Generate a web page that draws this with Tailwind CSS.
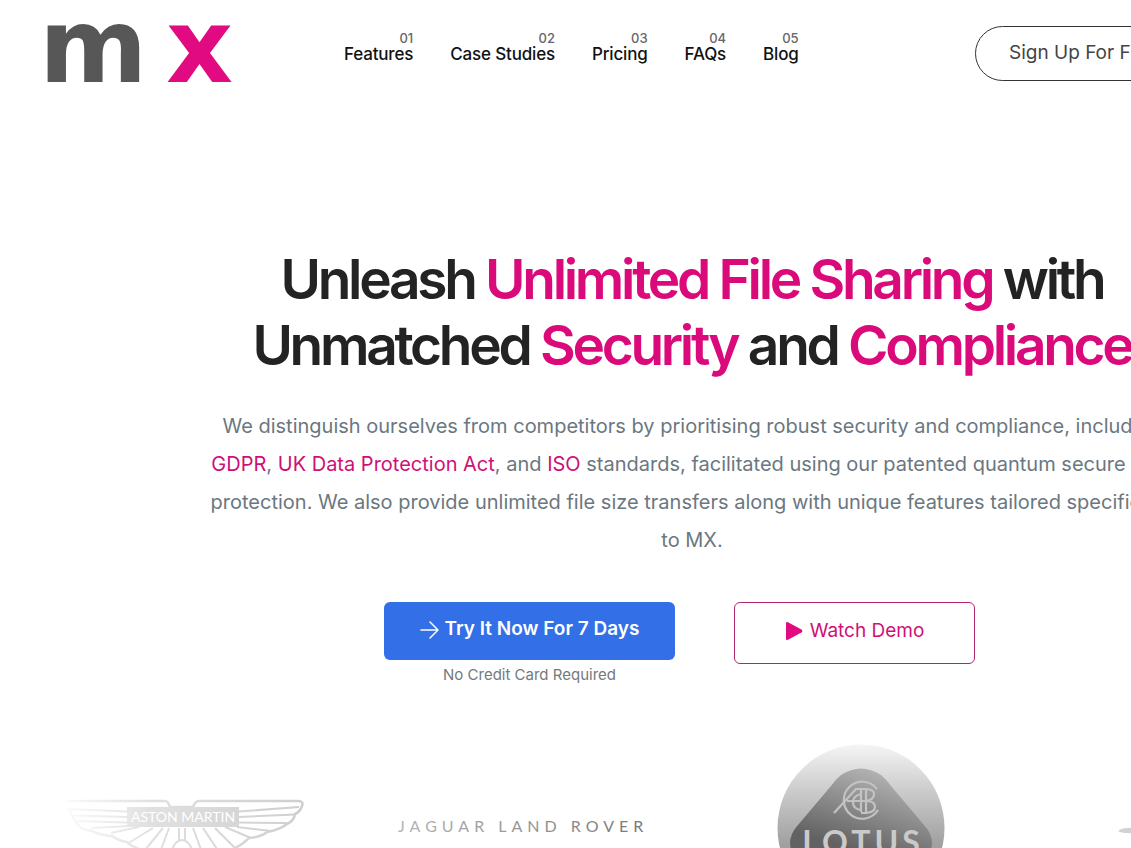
<!DOCTYPE html>
<html lang="en">
<head>
    <meta charset="UTF-8">
    <meta name="viewport" content="width=device-width, initial-scale=1.0">
    <title>MX - Unlimited File Sharing</title>
    <script src="https://cdn.jsdelivr.net/npm/@tailwindcss/browser@4"></script>
</head>
<body class="bg-white font-['Inter',sans-serif] overflow-x-hidden">
    <div class="min-w-[1384px]">
        <!-- Header -->
        <header class="flex items-start px-[47px] pt-[26px]">
            <a href="#" aria-label="MX home" class="w-[190px] shrink-0">
                <svg width="190" height="58" viewBox="0 0 190 58" class="overflow-visible font-['DejaVu_Sans',sans-serif] font-bold">
                    <text x="-8" y="56" font-size="104" fill="#575757">m</text>
                    <text x="119" y="56" font-size="104" fill="#e20a80">x</text>
                </svg>
            </a>
            <nav class="ml-[107px] flex gap-[37px] pt-[5px] text-[17px] leading-[18px] font-medium tracking-[-0.01em] text-[#111]">
                <a href="#" class="flex flex-col"><span class="self-end text-[13px] leading-[14px] tracking-normal text-[#666]">01</span>Features</a>
                <a href="#" class="flex flex-col"><span class="self-end text-[13px] leading-[14px] tracking-normal text-[#666]">02</span>Case Studies</a>
                <a href="#" class="flex flex-col"><span class="self-end text-[13px] leading-[14px] tracking-normal text-[#666]">03</span>Pricing</a>
                <a href="#" class="flex flex-col"><span class="self-end text-[13px] leading-[14px] tracking-normal text-[#666]">04</span>FAQs</a>
                <a href="#" class="flex flex-col"><span class="self-end text-[13px] leading-[14px] tracking-normal text-[#666]">05</span>Blog</a>
            </nav>
            <button type="button" class="ml-auto h-[55px] w-[362px] rounded-full border border-[#333] px-[33px] text-left text-[19px] text-[#444]">Sign Up For Free</button>
        </header>

        <main>
            <!-- Hero -->
            <section class="pt-[162px] text-center">
                <h1 class="text-[55px] leading-[66px] font-semibold tracking-[-0.06em] text-[#232323]">
                    Unleash <span class="text-[#db0a7b]">Unlimited File Sharing</span> with<br>
                    Unmatched <span class="text-[#db0a7b]">Security</span> and <span class="text-[#db0a7b]">Compliance</span>
                </h1>
                <p class="mx-auto mt-[29px] max-w-[975px] text-[20px] leading-[38px] text-[#6b7780]">
                    We distinguish ourselves from competitors by prioritising robust security and compliance, including
                    <a href="#" class="text-[#cf0f78]">GDPR</a>, <a href="#" class="text-[#cf0f78]">UK Data Protection Act</a>, and <a href="#" class="text-[#cf0f78]">ISO</a> standards, facilitated using our patented quantum secure data
                    protection. We also provide unlimited file size transfers along with unique features tailored specifically
                    to MX.
                </p>
                <div class="mx-auto mt-[43px] grid w-[650px] grid-cols-2 items-start">
                    <div class="flex flex-col items-center">
                        <button type="button" class="flex h-[58px] w-[291px] items-center justify-center gap-[6px] rounded-[6px] bg-[#336fe6] pb-[3px] text-[19px] font-semibold text-white">
                            <svg width="19" height="18" viewBox="0 0 19 18" fill="none" stroke="currentColor" stroke-width="1.5" stroke-linecap="round" stroke-linejoin="round"><path d="M1 9h17M10 1l8 8-8 8"/></svg>
                            Try It Now For 7 Days
                        </button>
                        <p class="mt-[5px] text-[15px] leading-[20px] text-[#73797f]">No Credit Card Required</p>
                    </div>
                    <div class="flex justify-center">
                        <button type="button" class="flex h-[62px] w-[241px] items-center justify-center gap-[7px] rounded-[6px] border border-[#b5256f] pb-[4px] text-[19px] text-[#cf0f78]">
                            <svg width="18" height="20" viewBox="0 0 18 20" fill="#e20a80"><path d="M1 2.300q0-2 2-1L16.500 8.500q1.800 1.500 0 3L3 18.700q-2 .8-2-1z"/></svg>
                            Watch Demo
                        </button>
                    </div>
                </div>
            </section>

            <!-- Customer logos -->
            <section class="mx-[18px] mt-[59px] grid grid-cols-4 items-center justify-items-center">
                <svg width="240" height="60" viewBox="0 0 240 60" fill="none" role="img" aria-label="Aston Martin">
                    <defs>
                        <linearGradient id="wing" gradientUnits="userSpaceOnUse" x1="0" y1="0" x2="240" y2="0">
                            <stop offset="0" stop-color="#fafafa"/>
                            <stop offset=".35" stop-color="#e0e0e0"/>
                            <stop offset="1" stop-color="#cecece"/>
                        </linearGradient>
                    </defs>
                    <g stroke="url(#wing)" stroke-width="2">
                        <path stroke-width="2.500" d="M0 3.010H98q3 0 5 6h23q2-6 6-6h99q6 0 4 5-2 6-7 8-1 7-8 10-8 6-20 8-6 5-18 6-6 6-14 10-8 6-20 8H90q-12-2-20-8-6-2-10-6-8-1-15-6-12-1-20-5-10-1-15-7Q4 17 2 11"/>
                        <path d="M0 11.010 60 13.500M6 17.500 60 19M10 23l50 1.500M24 30l38-2M44 35l28-6M60 46l26-16M78 52l18-22M92 57l10-27M232 9.010 172 13.500M228 16.500 172 19M220 25l-48-.5M204 33l-34-4M184 40l-26-11M168 50l-20-20M152 54l-16-24M136 57l-10-27"/>
                        <path d="M104 54q4-12 11-12t11 12M112 30v12M118 30v12"/>
                    </g>
                    <path d="M60 9h112v20H60z" fill="url(#wing)"/>
                    <text x="116" y="24" text-anchor="middle" font-size="14" fill="#fff" class="font-['Lato',sans-serif]">ASTON MARTIN</text>
                </svg>
                <svg width="256" height="20" viewBox="0 0 256 20" role="img" aria-label="Jaguar Land Rover">
                    <defs>
                        <linearGradient id="jlr" x1="0" x2="1">
                            <stop offset="0" stop-color="#b5b5b5"/>
                            <stop offset="1" stop-color="#777"/>
                        </linearGradient>
                    </defs>
                    <text x="2" y="14" font-size="16" fill="url(#jlr)" class="font-['Lato',sans-serif] tracking-[5px]">JAGUAR LAND ROVER</text>
                </svg>
                <svg width="168" height="168" viewBox="0 0 168 168" role="img" aria-label="Lotus">
                    <defs>
                        <linearGradient id="disc" x1="0" y1="0" x2="0" y2="1">
                            <stop offset="0" stop-color="#f5f5f5"/>
                            <stop offset=".28" stop-color="#cbcbcb"/>
                            <stop offset=".6" stop-color="#a0a0a0"/>
                        </linearGradient>
                        <linearGradient id="shield" gradientUnits="userSpaceOnUse" x1="100" y1="24" x2="75" y2="105">
                            <stop offset="0" stop-color="#b5b5b5"/>
                            <stop offset="1" stop-color="#626262"/>
                        </linearGradient>
                    </defs>
                    <circle cx="84" cy="84" r="83.500" fill="url(#disc)"/>
                    <path d="M64 31q20-13 40 0 5 4 10 11l33 39q8 9 8 18 0 12-10 18-25 20-61 29-36-9-61-29-10-6-10-18 0-9 8-18l33-39q5-7 10-11z" fill="url(#shield)"/>
                    <g fill="none" stroke="#c3c3c3" stroke-width="2.200">
                        <path d="M100 45a18.500 18.500 0 1 0 1 21"/>
                        <path d="M57 69 79 45h5v23M70 57h14M84 45h6q8 1 7 6-1 5-8 6h-7M89 57q9 0 9 6 0 5-9 6h-5M89 45v24M84 50q-8 2-8 8 0 7 8 8"/>
                    </g>
                    <text x="86" y="110" text-anchor="middle" font-size="32" font-weight="700" fill="#cacaca" class="font-['Lato',sans-serif] tracking-[4px]">LOTUS</text>
                </svg>
                <svg width="160" height="20" viewBox="0 0 160 20" role="img" aria-label="Partner">
                    <path d="M0 13q5-4 18-3h124q13-1 18 3-5 3-18 2H18q-13 1-18-2z" fill="#d2d2d2"/>
                </svg>
            </section>
        </main>
    </div>
</body>
</html>
